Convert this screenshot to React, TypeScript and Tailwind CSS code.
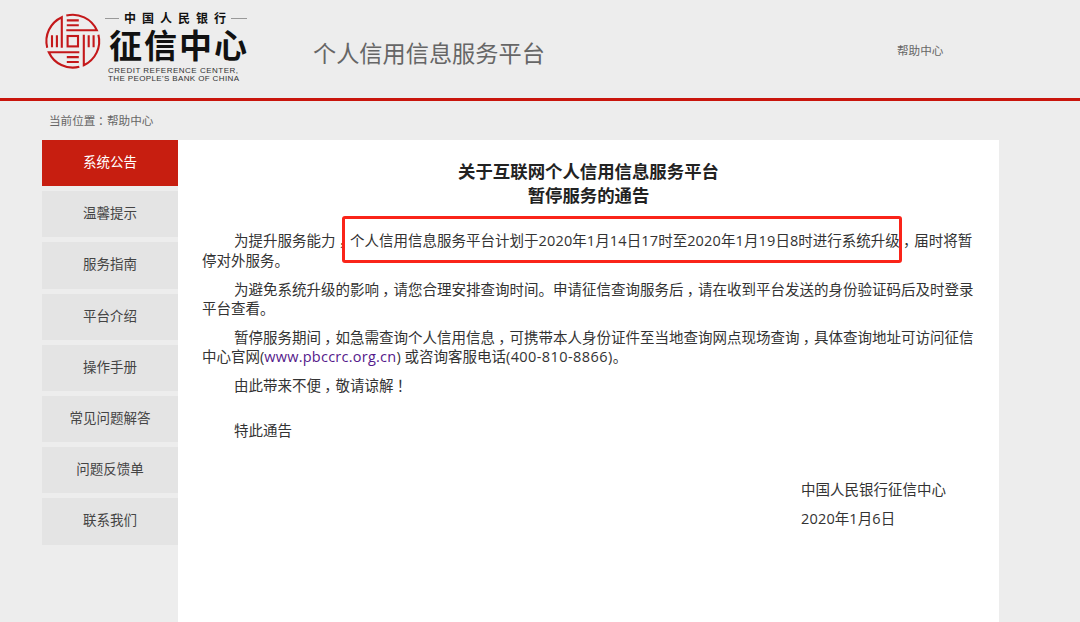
import React from "react";

const menuItems = [
    "系统公告",
    "温馨提示",
    "服务指南",
    "平台介绍",
    "操作手册",
    "常见问题解答",
    "问题反馈单",
    "联系我们",
];

// full-width punctuation sits near the middle of its cell
function Mark({ children }: { children: string }) {
    return <span className="inline-block w-[1em] pl-[0.22em]">{children}</span>;
}

function Num({ children }: { children: string }) {
    return <span className="tracking-[0.17px]">{children}</span>;
}

// one quarter of the seal, repeated around the centre
function SealArm({ angle }: { angle: number }) {
    return (
        <g transform={`rotate(${angle})`}>
            <path d="M-25.6 6.5A26.4 26.4 0 0 1 -11 -24V6.5" />
            <path d="M-20.8 -6V6M-15.9 -6V6" />
        </g>
    );
}

function Logo() {
    return (
        <svg width="210" height="78" viewBox="0 0 210 78" className="shrink-0">
            <g transform="translate(32.8 33.2)" fill="none" stroke="#c4181a" strokeWidth="2.1">
                <SealArm angle={0} />
                <SealArm angle={90} />
                <SealArm angle={180} />
                <SealArm angle={270} />
                <rect x="-5.2" y="-5.2" width="10.4" height="10.4" />
            </g>
            <path d="M65 10.5H79M191 10.5H207" stroke="#999" strokeWidth="1" />
            <g fill="#111" fontFamily="'Noto Sans CJK SC', sans-serif">
                <text x="84" y="15" fontSize="12" fontWeight="700" textLength="102">
                    中国人民银行
                </text>
                <text x="69" y="49.5" fontSize="33" fontWeight="700" textLength="138">
                    征信中心
                </text>
            </g>
            <g fill="#333" fontSize="8" fontFamily="'Liberation Sans', sans-serif">
                <text x="68" y="64.7" textLength="130">
                    CREDIT REFERENCE CENTER,
                </text>
                <text x="68" y="73" textLength="131">
                    THE PEOPLE'S BANK OF CHINA
                </text>
            </g>
        </svg>
    );
}

function Header() {
    return (
        <header className="flex h-[101px] border-b-3 border-[#c9150c] pl-10">
            <div className="pt-2">
                <Logo />
            </div>
            <h1 className="ml-[63px] w-[584px] pt-[36px] text-[23.2px] leading-[34px] text-[#666]">
                个人信用信息服务平台
            </h1>
            <a className="pt-[42px] text-[11.6px] leading-[18px] text-[#666]">帮助中心</a>
        </header>
    );
}

function SideMenu() {
    return (
        <nav className="flex w-[136px] shrink-0 flex-col gap-[5px]">
            {menuItems.map((item, i) => (
                <a
                    key={item}
                    className={`flex h-[46.2px] items-center justify-center text-[13.5px] ${
                        i === 0 ? "bg-[#c71e10] text-white" : "bg-[#e4e4e4] text-[#444]"
                    }`}
                >
                    <span className="-mt-0.5">{item}</span>
                </a>
            ))}
        </nav>
    );
}

function Notice() {
    return (
        <main className="h-[482px] w-[821px] bg-white pt-5 pl-6 text-[14.5px] leading-[19.4px] whitespace-nowrap text-[#333]">
            <h2 className="mr-6 text-center text-[17.4px] leading-[23.5px] font-bold text-[#222]">
                关于互联网个人信用信息服务平台
                <br />
                暂停服务的通告
            </h2>
            <div className="mt-[24.4px] flex flex-col gap-[9.45px]">
                <p>
                    <span className="relative ml-8">
                        为提升服务能力<Mark>，</Mark>个人信用信息服务平台计划于<Num>2020</Num>年
                        <Num>1</Num>月<Num>14</Num>日<Num>17</Num>时至<Num>2020</Num>年<Num>1</Num>月
                        <Num>19</Num>日<Num>8</Num>时进行系统升级<Mark>，</Mark>届时将暂
                        <i className="absolute -top-[15px] left-[108px] h-[47px] w-[560px] rounded-[3px] border-3 border-[#fa2419]" />
                    </span>
                    <br />
                    停对外服务。
                </p>
                <p>
                    <span className="ml-8">
                        为避免系统升级的影响<Mark>，</Mark>请您合理安排查询时间。申请征信查询服务后
                        <Mark>，</Mark>请在收到平台发送的身份验证码后及时登录
                    </span>
                    <br />
                    平台查看。
                </p>
                <p>
                    <span className="ml-8">
                        暂停服务期间<Mark>，</Mark>如急需查询个人信用信息<Mark>，</Mark>
                        可携带本人身份证件至当地查询网点现场查询<Mark>，</Mark>具体查询地址可访问征信
                    </span>
                    <br />
                    中心官网(<a className="tracking-[0.24px] text-[#551a8b]">www.pbccrc.org.cn</a>){" "}
                    或咨询客服电话<span className="tracking-[0.42px]">(400-810-8866)</span>。
                </p>
                <p className="pl-8">
                    由此带来不便<Mark>，</Mark>敬请谅解<Mark>！</Mark>
                </p>
            </div>
            <p className="mt-[25px] pl-8">特此通告</p>
            <div className="mt-[40.4px] flex flex-col gap-[9.45px] pl-[599px]">
                <p>中国人民银行征信中心</p>
                <p>
                    <Num>2020</Num>年<Num>1</Num>月<Num>6</Num>日
                </p>
            </div>
        </main>
    );
}

function App() {
    return (
        <div className="h-[622px] overflow-hidden bg-[#ededed] font-['Open_Sans','Noto_Sans_CJK_SC',sans-serif]">
            <Header />
            <div className="flex h-[39px] items-center pl-[49px] text-[11.6px] text-[#666]">
                <span>
                    当前位置<Mark>：</Mark>帮助中心
                </span>
            </div>
            <div className="flex pl-[42px]">
                <SideMenu />
                <Notice />
            </div>
        </div>
    );
}

export default App;
